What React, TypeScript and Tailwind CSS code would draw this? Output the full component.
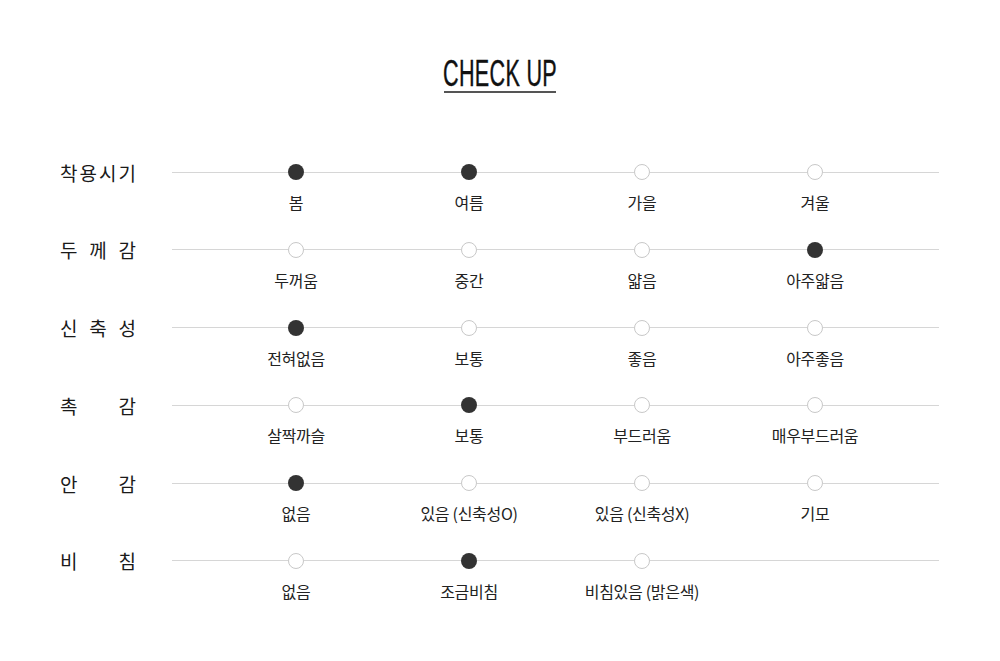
import React from "react";

type Row = { label: string; options: string[]; on: number[] };

const rows: Row[] = [
  { label: "착용시기", options: ["봄", "여름", "가을", "겨울"], on: [0, 1] },
  { label: "두께감", options: ["두꺼움", "중간", "얇음", "아주얇음"], on: [3] },
  { label: "신축성", options: ["전혀없음", "보통", "좋음", "아주좋음"], on: [0] },
  { label: "촉감", options: ["살짝까슬", "보통", "부드러움", "매우부드러움"], on: [1] },
  { label: "안감", options: ["없음", "있음 (신축성O)", "있음 (신축성X)", "기모"], on: [0] },
  { label: "비침", options: ["없음", "조금비침", "비침있음 (밝은색)"], on: [1] },
];

function Dot({ on }: { on: boolean }) {
  return on ? (
    <div className="w-4 h-4 rounded-full bg-[#333333] shrink-0" />
  ) : (
    <div className="w-4 h-4 rounded-full bg-white border border-[#c8c8c8] shrink-0" />
  );
}

export default function App() {
  return (
    <div
      className="w-[1000px] h-[661px] bg-white text-[#222]"
      style={{ fontFamily: '"Noto Sans CJK KR", "Noto Sans", sans-serif' }}
    >
      {/* Title */}
      <div className="flex justify-center pt-[52px]">
        <div className="w-[112px] border-b-2 border-[#555] flex justify-center h-[41px] overflow-visible">
          <span
            className="inline-block whitespace-nowrap text-[36px] leading-[44px] text-[#111] scale-x-[0.6] tracking-[0.5px] [-webkit-text-stroke:0.4px_#111]"
            style={{ fontFamily: '"Liberation Sans", Arial, sans-serif' }}
          >
            CHECK UP
          </span>
        </div>
      </div>

      {/* Rows */}
      <div className="mt-[71px] flex flex-col">
        {rows.map((row) => (
          <div key={row.label} className="flex h-[77.8px]">
            <div className="w-[172px] pl-[60px] h-4 flex items-center">
              <div className="w-[76px] flex justify-between text-[19px] leading-none text-[#1a1a1a]">
                {row.label.split("").map((ch, i) => (
                  <span key={i}>{ch}</span>
                ))}
              </div>
            </div>
            <div className="w-[767px] flex flex-col">
              <div className="flex items-center h-4">
                <div className="w-[37.5px] h-px bg-[#d6d6d6]" />
                {[0, 1, 2, 3].map((ci) => (
                  <div key={ci} className="w-[173px] flex items-center">
                    <div className="flex-1 h-px bg-[#d6d6d6]" />
                    {ci < row.options.length ? (
                      <Dot on={row.on.includes(ci)} />
                    ) : (
                      <div className="w-4 h-px bg-[#d6d6d6]" />
                    )}
                    <div className="flex-1 h-px bg-[#d6d6d6]" />
                  </div>
                ))}
                <div className="w-[37.5px] h-px bg-[#d6d6d6]" />
              </div>
              <div className="flex pl-[37.5px] mt-[14px]">
                {row.options.map((o) => (
                  <div
                    key={o}
                    className="w-[173px] text-center text-[16px] leading-none text-[#222] whitespace-nowrap tracking-[-0.3px]"
                  >
                    {o}
                  </div>
                ))}
              </div>
            </div>
          </div>
        ))}
      </div>
    </div>
  );
}
